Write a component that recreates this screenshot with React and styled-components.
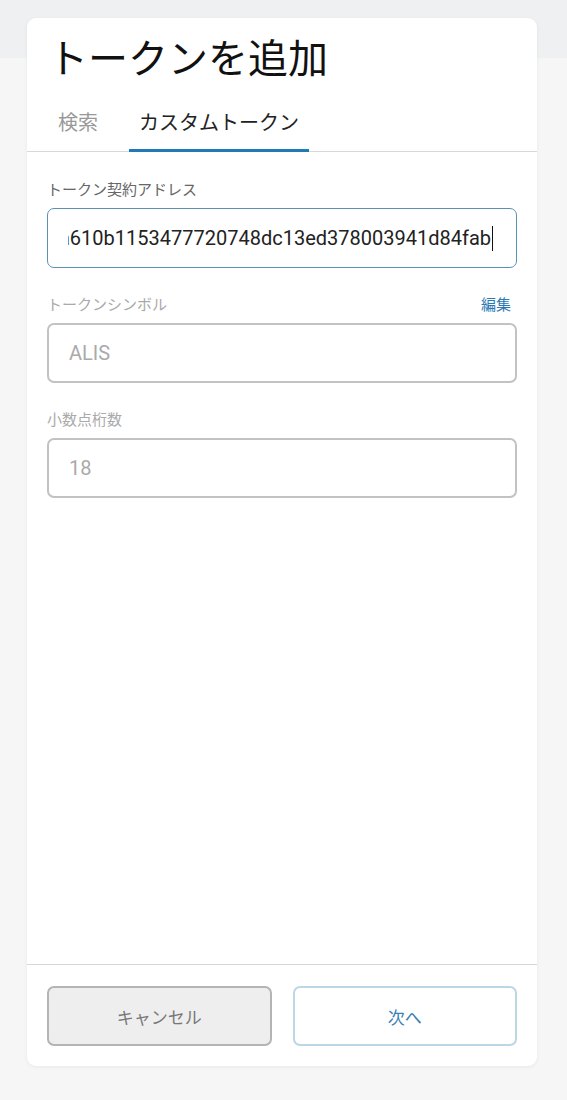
import React from 'react';
import styled, { createGlobalStyle } from 'styled-components';

const GlobalStyle = createGlobalStyle`
  html, body {
    margin: 0;
    padding: 0;
    height: 100%;
  }
  body {
    font-family: Roboto, 'Noto Sans CJK JP', sans-serif;
    background: linear-gradient(#eff0f2 0, #eff0f2 58px, #f6f6f6 58px, #f6f6f6 100%);
  }
`;

const Page = styled.div`
  width: 567px;
  height: 1100px;
  box-sizing: border-box;
  padding: 18px 30px 34px 27px;
`;

const Card = styled.div`
  height: 100%;
  background: #fff;
  border-radius: 9px;
  box-shadow: 0 1px 4px rgba(0, 0, 0, 0.06);
  display: flex;
  flex-direction: column;
`;

const Header = styled.div`
  border-bottom: 1px solid #d8d8d8;
`;

const Title = styled.h1`
  margin: 0;
  padding: 12px 0 0 21px;
  font-family: 'Noto Sans CJK JP', sans-serif;
  font-weight: 400;
  font-size: 40px;
  line-height: 52px;
  color: #111;
`;

const Tabs = styled.div`
  display: flex;
  padding-left: 21px;
  margin-top: 26px;
`;

const Tab = styled.div`
  font-family: 'Noto Sans CJK JP', sans-serif;
  font-size: 20px;
  line-height: 28px;
  padding: 0 10px 13px;
  margin-right: 21px;
  color: ${(p) => (p.$active ? '#222' : '#999')};
  border-bottom: 3px solid ${(p) => (p.$active ? '#1f7ab6' : 'transparent')};
  margin-bottom: -1px;
`;

const Body = styled.div`
  flex: 1;
  padding: 27px 20px 0;
  display: flex;
  flex-direction: column;
  gap: 26px;
`;

const Field = styled.div`
  display: flex;
  flex-direction: column;
  gap: 9px;
`;

const LabelRow = styled.div`
  display: flex;
  justify-content: space-between;
  align-items: center;
  height: 20px;
  padding-right: 6px;
`;

const Label = styled.span`
  font-family: 'Noto Sans CJK JP', sans-serif;
  font-size: 15px;
  line-height: 20px;
  color: ${(p) => (p.$muted ? '#aaa' : '#666')};
`;

const EditLink = styled.a`
  font-family: 'Noto Sans CJK JP', sans-serif;
  font-size: 15px;
  line-height: 20px;
  color: #2a7bb4;
  text-decoration: none;
  cursor: pointer;
`;

const Box = styled.div`
  height: 60px;
  box-sizing: border-box;
  border-radius: 7px;
  border: ${(p) => (p.$focused ? '1px solid #5a93b3' : '2px solid #c2c2c2')};
  padding: ${(p) => (p.$focused ? '0 23px 0 20px' : '0 20px')};
  display: flex;
  align-items: center;
  font-size: 20px;
  color: ${(p) => (p.$focused ? '#222' : '#aaa')};
`;

const Scroll = styled.div`
  flex: 1;
  min-width: 0;
  display: flex;
  justify-content: flex-end;
  align-items: center;
  overflow: hidden;
  white-space: nowrap;
`;

const Caret = styled.span`
  display: inline-block;
  width: 1px;
  height: 25px;
  background: #111;
  margin-left: 1px;
  flex-shrink: 0;
`;

const Footer = styled.div`
  border-top: 1px solid #d8d8d8;
  padding: 21px 20px 20px;
  display: grid;
  grid-template-columns: 1fr 1fr;
  gap: 21px;
`;

const Button = styled.button`
  height: 60px;
  border-radius: 7px;
  font-family: 'Noto Sans CJK JP', sans-serif;
  font-size: 17px;
  background: ${(p) => (p.$primary ? '#fff' : '#eeeeee')};
  border: 2px solid ${(p) => (p.$primary ? '#bcd6e6' : '#b4b4b4')};
  color: ${(p) => (p.$primary ? '#3b7fb3' : '#777')};
  cursor: pointer;
`;

export default function App() {
  return (
    <>
      <GlobalStyle />
      <Page>
        <Card>
          <Header>
            <Title>トークンを追加</Title>
            <Tabs>
              <Tab>検索</Tab>
              <Tab $active>カスタムトークン</Tab>
            </Tabs>
          </Header>
          <Body>
            <Field>
              <Label>トークン契約アドレス</Label>
              <Box $focused>
                <Scroll>
                  <span>0xea610b1153477720748dc13ed378003941d84fab</span>
                  <Caret />
                </Scroll>
              </Box>
            </Field>
            <Field>
              <LabelRow>
                <Label $muted>トークンシンボル</Label>
                <EditLink>編集</EditLink>
              </LabelRow>
              <Box>ALIS</Box>
            </Field>
            <Field>
              <Label $muted>小数点桁数</Label>
              <Box>18</Box>
            </Field>
          </Body>
          <Footer>
            <Button>キャンセル</Button>
            <Button $primary>次へ</Button>
          </Footer>
        </Card>
      </Page>
    </>
  );
}
